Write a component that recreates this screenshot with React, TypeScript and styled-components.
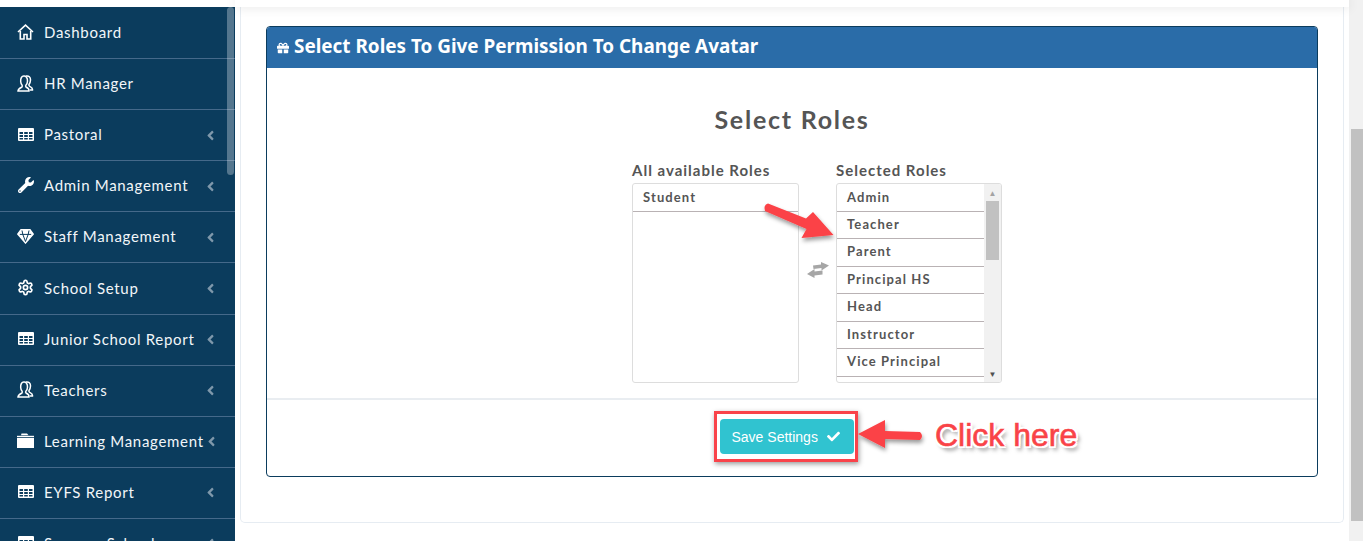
import React from 'react';
import styled, { createGlobalStyle } from 'styled-components';
import { FaWrench, FaAngleLeft, FaGift, FaCheck } from 'react-icons/fa';
import { LuSettings } from 'react-icons/lu';

const GlobalStyle = createGlobalStyle`
  html, body { margin: 0; padding: 0; height: 100%; overflow: hidden; background: #fff; }
  * { box-sizing: border-box; }
`;

const Page = styled.div`
  display: flex;
  width: 1363px;
  height: 541px;
  overflow: hidden;
  background: #fff;
  font-family: Lato, "Open Sans", sans-serif;
`;

const Sidebar = styled.nav`
  position: relative;
  flex: 0 0 235px;
  height: 534px;
  margin-top: 7px;
  padding-top: 1px;
  background: #0b3c5d;
  overflow: hidden;
`;

const SideThumb = styled.div`
  position: absolute;
  top: 0;
  right: 1px;
  width: 7px;
  height: 168px;
  border-radius: 4px;
  background: rgba(255, 255, 255, 0.3);
`;

const NavItem = styled.a`
  display: flex;
  align-items: center;
  height: 51.1px;
  padding: 0 17px 2px 17px;
  border-bottom: 1px solid #45698a;
  color: #f2f6f9;
  font-size: 15px;
  letter-spacing: 0.7px;
  white-space: nowrap;
`;

const NavIcon = styled.span`
  display: flex;
  align-items: center;
  justify-content: center;
  flex: 0 0 17px;
  margin-right: 10px;
  font-size: 16px;
  color: #fff;
`;

const NavLabel = styled.span`
  flex: 1;
`;

const Caret = styled(FaAngleLeft)`
  flex: 0 0 auto;
  margin-top: 2px;
  color: #7f98ab;
  font-size: 15px;
`;

const Main = styled.main`
  flex: 1;
  display: flex;
  flex-direction: column;
  min-width: 0;
`;

const TopBar = styled.div`
  position: relative;
  height: 7px;
  background: #fff;
  box-shadow: 0 0 12px rgba(0, 0, 0, 0.12);
`;

const Content = styled.div`
  height: 516px;
  margin: 0 5px 0 5px;
  padding: 19px 25px 0;
  background: #fff;
  border: 1px solid #e6ecf2;
  border-top: 0;
  border-radius: 0 0 5px 5px;
`;

const Panel = styled.section`
  height: 451px;
  border: 1px solid #0b3c5d;
  border-radius: 4px;
  overflow: hidden;
`;

const PanelHead = styled.h3`
  display: flex;
  align-items: center;
  gap: 5px;
  height: 41px;
  margin: 0;
  padding: 0 0 3px 10px;
  background: #2a6ca8;
  color: #fff;
  font-family: "Noto Sans", sans-serif;
  font-size: 18.9px;
  font-weight: 700;
  svg { font-size: 12px; margin-top: 3px; }
`;

const PanelBody = styled.div`
  height: 332px;
  padding-top: 36px;
  border-bottom: 2px solid #e9edf1;
`;

const Heading = styled.h2`
  margin: 0 0 28px;
  color: #555;
  font-size: 25px;
  line-height: 30px;
  font-weight: 700;
  letter-spacing: 1.75px;
  text-align: center;
`;

const Dual = styled.div`
  display: flex;
  justify-content: center;
  padding-left: 50px;
`;

const Column = styled.div`
  width: ${p => p.$w}px;
`;

const ColLabel = styled.div`
  height: 21px;
  line-height: 16px;
  color: #555;
  font-size: 15px;
  font-weight: 700;
  letter-spacing: 1px;
  white-space: nowrap;
`;

const ListBox = styled.div`
  display: flex;
  height: 200px;
  border: 1px solid #ddd;
  border-radius: 3px;
  overflow: hidden;
`;

const Items = styled.div`
  flex: 1;
  min-width: 0;
  height: 198px;
  padding-top: 0.5px;
  overflow: hidden;
`;

const Item = styled.div`
  height: 27.45px;
  padding-left: 10px;
  border-bottom: 1px solid #b9b2b4;
  line-height: 25px;
  color: #555;
  font-size: 13px;
  font-weight: 700;
  letter-spacing: 1.1px;
  white-space: nowrap;
`;

const Track = styled.div`
  display: flex;
  flex-direction: column;
  align-items: center;
  flex: 0 0 17px;
  background: #f1f1f1;
`;

const ScrollBtn = styled.div`
  flex: 0 0 17px;
  display: flex;
  align-items: center;
  justify-content: center;
  color: ${p => p.$dim ? '#a3a3a3' : '#505050'};
  font-size: 8px;
  line-height: 1;
`;

const ScrollThumb = styled.div`
  width: 13px;
  height: 59px;
  background: #c1c1c1;
`;

const TrackGap = styled.div`
  flex: 1;
`;

const Swap = styled.div`
  flex: 0 0 37px;
  display: flex;
  align-items: center;
  justify-content: center;
  padding-bottom: 5px;
`;

const Footer = styled.div`
  display: flex;
  justify-content: center;
  padding: 11px 13px 0 0;
`;

const HighlightBox = styled.div`
  padding: 5px 1px 5px 3px;
  border: 3px solid #f9434a;
  box-shadow: 1px 2px 5px rgba(0, 0, 0, 0.4);
`;

const SaveButton = styled.button`
  display: flex;
  align-items: center;
  gap: 9px;
  width: 134px;
  height: 35px;
  padding: 0 0 0 12px;
  background: #30c3d0;
  border: 0;
  border-radius: 4px;
  color: #fff;
  font-family: "Liberation Sans", Arial, sans-serif;
  font-size: 14px;
  svg { font-size: 13px; }
`;

const Annotation = styled.svg`
  position: absolute;
  left: 0;
  top: 0;
  pointer-events: none;
`;

const ClickHere = styled.div`
  position: absolute;
  left: 935px;
  top: 416px;
  color: #f94347;
  font-family: "Liberation Sans", Arial, sans-serif;
  font-size: 32px;
  line-height: 38px;
  white-space: nowrap;
  -webkit-text-stroke: 0.6px #f94347;
  text-shadow:
    -2px 0 0 #fff, 2px 0 0 #fff, 0 -2px 0 #fff, 0 2px 0 #fff,
    -2px -2px 0 #fff, 2px -2px 0 #fff, -2px 2px 0 #fff, 2px 2px 0 #fff,
    3px 4px 4px rgba(0, 0, 0, 0.55);
`;

const PageTrack = styled.div`
  flex: 0 0 14px;
  padding-top: 129px;
  background: #f1f1f1;
`;

const PageThumb = styled.div`
  width: 12px;
  height: 392px;
  margin-left: 2px;
  background: #c1c1c1;
`;

const HomeIcon = () => (
  <svg width="17" height="16" viewBox="0 0 17 16" fill="none" stroke="#fff" strokeWidth="1.6">
    <path d="M1 8 8.500 1.200 16 8" />
    <path d="M3.300 7v8h3.700v-4.500h3V15h3.700V7" />
  </svg>
);

const UserIcon = () => (
  <svg width="17" height="17" viewBox="0 0 17 17" fill="none" stroke="#fff" strokeWidth="1.5">
    <path d="M1 16h11c.5-2-1-3-3-4-.6-.8-.5-1.400 0-2 1.800-1.500 2-6 .5-7.800C8 .6 5.500.8 4.400 2.500 3.200 4.500 3.500 8.500 5 10c.4.700.4 1.300 0 2-2 .9-4 2-4 4z" />
    <path d="M9 1c2.800-.6 4.600 1.200 4.500 4-.1 1.800-.5 3.400-1.500 4.500-.3.800 0 1.400.8 1.900 1.500.7 3 1.500 2.700 3.600h-2.500" />
  </svg>
);

const TableIcon = () => (
  <svg width="16" height="13" viewBox="0 0 16 13">
    <path fill="#fff" d="M1 0h14a1 1 0 0 1 1 1v11a1 1 0 0 1-1 1H1a1 1 0 0 1-1-1V1a1 1 0 0 1 1-1z" />
    <path fill="#0b3c5d" d="M1.500 4h3.500v2H1.500zM6.200 4h3.600v2H6.200zM11 4h3.500v2H11zM1.500 7h3.500v2H1.500zM6.200 7h3.600v2H6.200zM11 7h3.500v2H11zM1.500 10h3.500v1.600H1.500zM6.200 10h3.600v1.600H6.200zM11 10h3.500v1.600H11z" />
  </svg>
);

const GemIcon = () => (
  <svg width="17" height="15" viewBox="0 0 17 15" fill="none" stroke="#fff" strokeWidth="1.4">
    <path fill="#fff" d="M4 .8h9L16.200 5 8.500 14 .8 5z" />
    <path stroke="#0b3c5d" strokeWidth="1" d="M2.800 5.400h11.400M5.800 5.400 8.500 12.500 11.200 5.400M5 1.500 5.800 5.400M12 1.500 11.200 5.400" />
  </svg>
);

const FolderIcon = () => (
  <svg width="17" height="15" viewBox="0 0 17 15" fill="#fff">
    <path d="M4.500.5h5.500l1.500 1.800H4z" />
    <path d="M0 2.800h17V4H0z" />
    <path d="M0 4.800h17V15H0z" />
  </svg>
);

const ExchangeIcon = () => (
  <svg width="22" height="16" viewBox="0 0 22 16" fill="#a6a6a6">
    <path d="M6 3.500 14 2.500V0L22 3.500 14.500 8.500V6L6.500 7z" />
    <path d="M15.500 8.500 7.500 9.500V7L0 12 7.500 16V13.500L15.500 12.500z" />
  </svg>
);

const menu = [
  { label: 'Dashboard', icon: <HomeIcon /> },
  { label: 'HR Manager', icon: <UserIcon /> },
  { label: 'Pastoral', icon: <TableIcon />, more: true },
  { label: 'Admin Management', icon: <FaWrench />, more: true },
  { label: 'Staff Management', icon: <GemIcon />, more: true },
  { label: 'School Setup', icon: <LuSettings strokeWidth={2.4} size={17} />, more: true },
  { label: 'Junior School Report', icon: <TableIcon />, more: true },
  { label: 'Teachers', icon: <UserIcon />, more: true },
  { label: 'Learning Management', icon: <FolderIcon />, more: true },
  { label: 'EYFS Report', icon: <TableIcon />, more: true },
  { label: 'Summer School', icon: <TableIcon />, more: true },
];

const selected = ['Admin', 'Teacher', 'Parent', 'Principal HS', 'Head', 'Instructor', 'Vice Principal'];

export default function App() {
  return (
    <Page>
      <GlobalStyle />
      <Sidebar>
        {menu.map(m => (
          <NavItem key={m.label}>
            <NavIcon>{m.icon}</NavIcon>
            <NavLabel>{m.label}</NavLabel>
            {m.more && <Caret />}
          </NavItem>
        ))}
        <SideThumb />
      </Sidebar>
      <Main>
        <TopBar />
        <Content>
          <Panel>
            <PanelHead><FaGift />Select Roles To Give Permission To Change Avatar</PanelHead>
            <PanelBody>
              <Heading>Select Roles</Heading>
              <Dual>
                <Column $w={167}>
                  <ColLabel>All available Roles</ColLabel>
                  <ListBox>
                    <Items><Item>Student</Item></Items>
                  </ListBox>
                </Column>
                <Swap><ExchangeIcon /></Swap>
                <Column $w={166}>
                  <ColLabel>Selected Roles</ColLabel>
                  <ListBox>
                    <Items>
                      {selected.map(r => <Item key={r}>{r}</Item>)}
                    </Items>
                    <Track>
                      <ScrollBtn $dim>▲</ScrollBtn>
                      <ScrollThumb />
                      <TrackGap />
                      <ScrollBtn>▼</ScrollBtn>
                    </Track>
                  </ListBox>
                </Column>
              </Dual>
            </PanelBody>
            <Footer>
              <HighlightBox>
                <SaveButton>Save Settings <FaCheck /></SaveButton>
              </HighlightBox>
            </Footer>
          </Panel>
        </Content>
      </Main>
      <PageTrack><PageThumb /></PageTrack>
      <Annotation width="1363" height="541" viewBox="0 0 1363 541">
        <defs>
          <filter id="drop" x="-20%" y="-20%" width="150%" height="150%">
            <feDropShadow dx="1" dy="3" stdDeviation="2" floodColor="#000" floodOpacity="0.4" />
          </filter>
        </defs>
        <path filter="url(#drop)" fill="#fb4246" d="M768 203.500 L806 218.500 L813 212 L833.500 235 L801.500 238 L806.500 229 L765 211 Q763 205 768 203.500 Z" />
        <path filter="url(#drop)" fill="#fb4246" d="M858 434 L885 420 L885 431 L920 432 Q924 436 920 440 L885 439 L885 448 Z" />
      </Annotation>
      <ClickHere>Click here</ClickHere>
    </Page>
  );
}
